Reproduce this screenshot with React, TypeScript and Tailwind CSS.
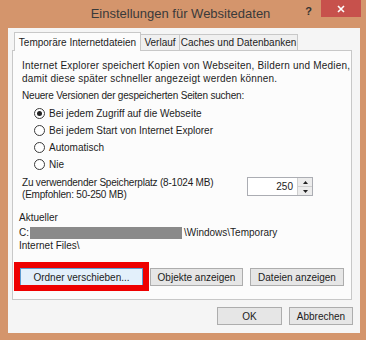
import React from "react";

function Radio({ checked, label }: { checked?: boolean; label: string }) {
  return (
    <div className="h-[17px] flex items-center pl-[12px]">
      <span className="w-[11px] h-[11px] rounded-full border border-[#3a3a3a] bg-white flex items-center justify-center shrink-0">
        {checked && <span className="w-[5px] h-[5px] rounded-full bg-[#222]" />}
      </span>
      <span className="ml-[4px]">{label}</span>
    </div>
  );
}

function Btn({ w, children, active }: { w: string; children: React.ReactNode; active?: boolean }) {
  return (
    <div
      className={
        "h-[18px] flex items-center justify-center border " +
        w +
        (active ? " bg-[#e3f0fb] border-[#5b9bd0]" : " bg-[#e6e6e6] border-[#adadad]")
      }
    >
      {children}
    </div>
  );
}

export default function App() {
  return (
    <div className="w-[366px] h-[340px] bg-[#d4956c] flex flex-col font-['Liberation_Sans',Arial,sans-serif] text-[10px] text-[#1c1c1c] overflow-hidden">
      {/* title bar */}
      <div className="h-[28px] flex shrink-0">
        <div className="flex-1" />
        <div className="text-[13px] text-[#3a3a3a] leading-[28px]">Einstellungen für Websitedaten</div>
        <div className="flex-1 flex justify-end items-start pr-[5px]">
          <span className="mt-[3px] mr-[9px] text-[11px] font-bold text-[#333]">?</span>
          <div className="w-[40px] h-[17px] bg-[#c7514c] flex items-center justify-center">
            <svg width="8" height="8" viewBox="0 0 8 8">
              <path d="M1 1L7 7M7 1L1 7" stroke="#fff" strokeWidth="1.6" />
            </svg>
          </div>
        </div>
      </div>

      {/* client */}
      <div className="ml-[8px] mr-[6px] h-[305px] bg-[#f5f5f5] flex flex-col px-[4px] pt-[4px] shrink-0">
        {/* tabs */}
        <div className="flex items-end h-[19px] -mb-px pl-[2px]">
          <div className="relative z-10 h-[19px] w-[127px] bg-[#fcfcfc] border border-b-0 border-[#c8c8c8] flex items-center justify-center pt-[1px]">
            Temporäre Internetdateien
          </div>
          <div className="h-[17px] w-[39px] bg-[#f0f0f0] border border-l-0 border-[#c8c8c8] flex items-center justify-center">
            Verlauf
          </div>
          <div className="h-[17px] w-[118px] bg-[#f0f0f0] border border-l-0 border-[#c8c8c8] flex items-center justify-center">
            Caches und Datenbanken
          </div>
        </div>

        {/* panel */}
        <div className="h-[250px] w-[340px] border border-[#c8c8c8] bg-[#fcfcfc] flex flex-col pl-[9px] pt-[8px] leading-[13px]">
          <div className="tracking-[0.2px]">
            <div>Internet Explorer speichert Kopien von Webseiten, Bildern und Medien,</div>
            <div>damit diese später schneller angezeigt werden können.</div>
          </div>
          <div className="mt-[4px] tracking-[-0.2px]">Neuere Versionen der gespeicherten Seiten suchen:</div>
          <div className="mt-[3px] flex flex-col">
            <Radio checked label="Bei jedem Zugriff auf die Webseite" />
            <Radio label="Bei jedem Start von Internet Explorer" />
            <Radio label="Automatisch" />
            <Radio label="Nie" />
          </div>
          <div className="mt-[4px] flex items-start">
            <div className="flex-1 leading-[12px] tracking-[-0.2px]">
              <div>Zu verwendender Speicherplatz (8-1024 MB)</div>
              <div>(Empfohlen: 50-250 MB)</div>
            </div>
            <div className="w-[66px] h-[19px] border border-[#abadb3] bg-white flex mr-[38px]">
              <div className="flex-1 text-right pr-[4px] leading-[17px]">250</div>
              <div className="w-[15px] flex flex-col border-l border-[#cfcfcf]">
                <div className="flex-1 bg-[#ececec] border-b border-[#cfcfcf] flex items-center justify-center">
                  <svg width="5" height="3" viewBox="0 0 5 3">
                    <path d="M0 3L2.5 0L5 3Z" fill="#222" />
                  </svg>
                </div>
                <div className="flex-1 bg-[#ececec] flex items-center justify-center">
                  <svg width="5" height="3" viewBox="0 0 5 3">
                    <path d="M0 0L2.5 3L5 0Z" fill="#222" />
                  </svg>
                </div>
              </div>
            </div>
          </div>
          <div className="-ml-[3px] mt-[10px]">
            <div>Aktueller</div>
            <div className="mt-[2px] flex items-center">
              <span>C:</span>
              <span className="inline-block w-[152px] h-[12px] bg-[#8a8a8a] ml-[1px] mr-[2px]" />
              <span>\Windows\Temporary</span>
            </div>
            <div>Internet Files\</div>
          </div>
          <div className="mt-[16px] -ml-[2px] flex gap-[7px]">
            <div className="relative">
              <Btn w="w-[123px]" active>
                Ordner verschieben...
              </Btn>
              <span className="absolute -left-[6px] -right-[6px] -top-[6px] -bottom-[5px] border-[6px] border-[#ee0000]" />
            </div>
            <Btn w="w-[93px]">Objekte anzeigen</Btn>
            <Btn w="w-[94px]">Dateien anzeigen</Btn>
          </div>
        </div>

        {/* bottom buttons */}
        <div className="mt-[7px] flex justify-end gap-[7px] mr-[3px]">
          <Btn w="w-[65px]">OK</Btn>
          <Btn w="w-[64px]">Abbrechen</Btn>
        </div>
      </div>
    </div>
  );
}
